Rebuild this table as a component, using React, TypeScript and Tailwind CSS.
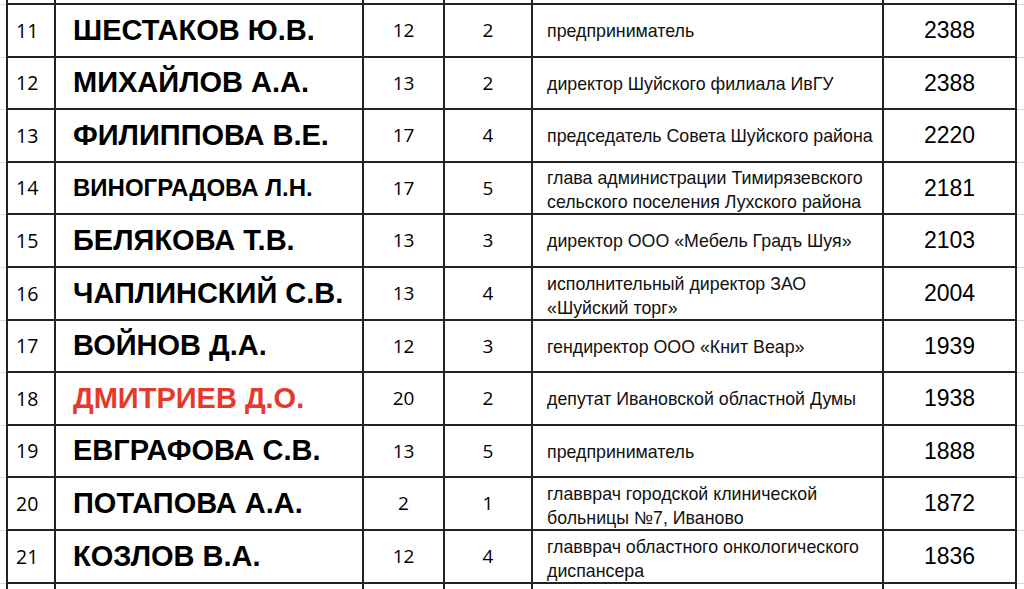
import React from "react";

type Row = {
  n: string;
  name: string;
  a: string;
  b: string;
  desc: string[];
  score: string;
  h: string;
  red?: boolean;
  small?: boolean;
};

const rows: Row[] = [
  { n: "11", name: "ШЕСТАКОВ Ю.В.", a: "12", b: "2", desc: ["предприниматель"], score: "2388", h: "h-[53px]" },
  { n: "12", name: "МИХАЙЛОВ А.А.", a: "13", b: "2", desc: ["директор Шуйского филиала ИвГУ"], score: "2388", h: "h-[52px]" },
  { n: "13", name: "ФИЛИППОВА В.Е.", a: "17", b: "4", desc: ["председатель Совета Шуйского района"], score: "2220", h: "h-[53px]" },
  { n: "14", name: "ВИНОГРАДОВА Л.Н.", a: "17", b: "5", desc: ["глава администрации Тимирязевского", "сельского поселения Лухского района"], score: "2181", h: "h-[52px]", small: true },
  { n: "15", name: "БЕЛЯКОВА Т.В.", a: "13", b: "3", desc: ["директор ООО «Мебель Градъ Шуя»"], score: "2103", h: "h-[53px]" },
  { n: "16", name: "ЧАПЛИНСКИЙ С.В.", a: "13", b: "4", desc: ["исполнительный директор ЗАО", "«Шуйский торг»"], score: "2004", h: "h-[53px]" },
  { n: "17", name: "ВОЙНОВ Д.А.", a: "12", b: "3", desc: ["гендиректор ООО «Книт Веар»"], score: "1939", h: "h-[52px]" },
  { n: "18", name: "ДМИТРИЕВ Д.О.", a: "20", b: "2", desc: ["депутат Ивановской областной Думы"], score: "1938", h: "h-[53px]", red: true },
  { n: "19", name: "ЕВГРАФОВА С.В.", a: "13", b: "5", desc: ["предприниматель"], score: "1888", h: "h-[52px]" },
  { n: "20", name: "ПОТАПОВА А.А.", a: "2", b: "1", desc: ["главврач городской клинической", "больницы №7, Иваново"], score: "1872", h: "h-[53px]" },
  { n: "21", name: "КОЗЛОВ В.А.", a: "12", b: "4", desc: ["главврач областного онкологического", "диспансера"], score: "1836", h: "h-[53px]" },
];

const cell = "border-r-2 border-b-2 border-[#222] flex items-center overflow-hidden";
const grid = "grid grid-cols-[48px_308px_81px_88px_351px_133px] border-l-2 border-[#222]";
const calib = { fontFamily: '"Open Sans", "Noto Sans", sans-serif' };

function EmptyRow({ h }: { h: string }) {
  return (
    <div className={`flex ${h}`}>
      <div className="w-[6px] border-b border-[#d9d9d9]" />
      <div className={grid}>
        <div className={cell} />
        <div className={cell} />
        <div className={cell} />
        <div className={cell} />
        <div className={cell} />
        <div className={cell} />
      </div>
      <div className="flex-1 border-b border-[#d9d9d9]" />
    </div>
  );
}

export default function App() {
  return (
    <div
      className="w-[1024px] h-[589px] overflow-hidden bg-white text-black"
      style={{ fontFamily: '"Liberation Sans", Arial, sans-serif' }}
    >
      <EmptyRow h="h-[5px]" />
      {rows.map((r) => (
        <div key={r.n} className={`flex ${r.h}`}>
          <div className="w-[6px] border-b border-[#d9d9d9]" />
          <div className={grid}>
            <div className={`${cell} pl-[8px] text-[19.5px]`} style={calib}>
              {r.n}
            </div>
            <div
              className={`${cell} pl-[17px] font-bold whitespace-nowrap ${
                r.small ? "text-[24px]" : "text-[29px]"
              } ${r.red ? "text-[#e5392b]" : "text-black"}`}
            >
              {r.name}
            </div>
            <div className={`${cell} justify-center text-[19px]`} style={calib}>
              {r.a}
            </div>
            <div className={`${cell} justify-center text-[19px]`} style={calib}>
              {r.b}
            </div>
            <div className={`${cell} pl-[14px] text-[17.8px] leading-[24px] text-[#111]`}>
              <div className={`whitespace-nowrap ${r.desc.length > 1 ? "pt-[4px]" : "pt-[1px]"}`}>
                {r.desc.map((d, i) => (
                  <div key={i}>{d}</div>
                ))}
              </div>
            </div>
            <div className={`${cell} justify-center text-[23px]`}>{r.score}</div>
          </div>
          <div className="flex-1 border-b border-[#d9d9d9]" />
        </div>
      ))}
      <EmptyRow h="h-[10px]" />
    </div>
  );
}
